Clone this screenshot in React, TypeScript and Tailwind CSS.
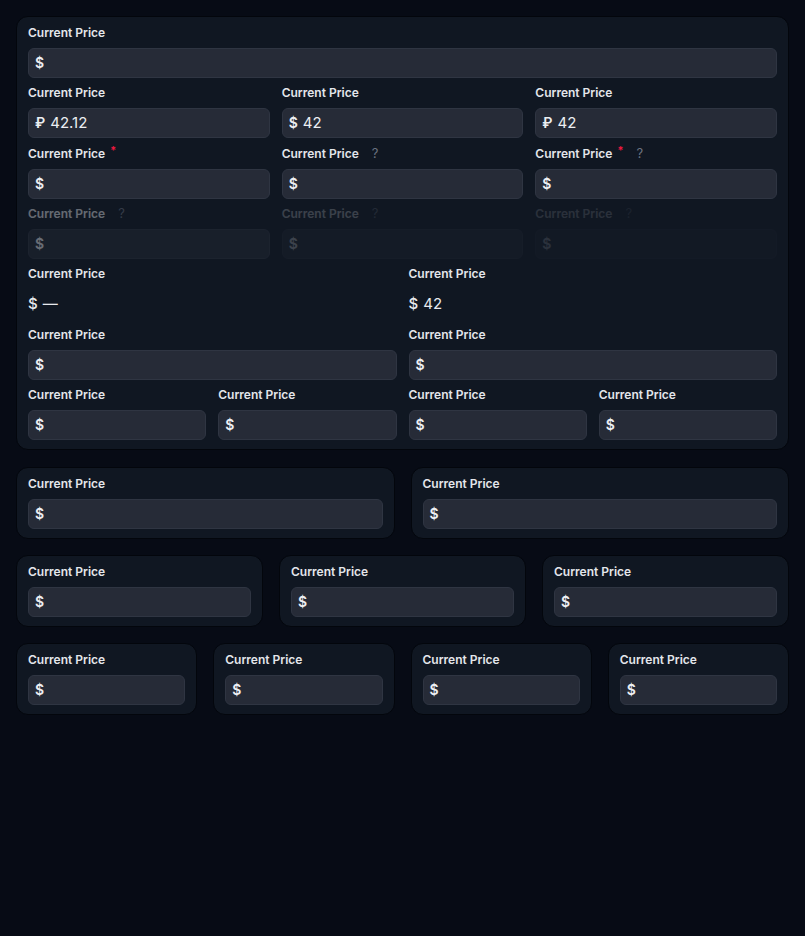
import React from "react";

type FieldProps = {
  prefix?: string;
  value?: string;
  required?: boolean;
  help?: boolean;
  fade?: string;
  display?: boolean;
};

function Field({ prefix = "$", value = "", required, help, fade = "", display }: FieldProps) {
  return (
    <div className={`flex flex-col min-w-0 ${fade}`}>
      <div className="flex items-center h-5 mb-[5px] text-xs font-semibold text-[#e4e6eb]">
        <span>Current Price</span>
        {required && <span className="ml-[5px] -mt-[7px] text-[11px] leading-none text-[#f0183f]">*</span>}
        {help && <span className="ml-[13px] text-[13px] font-normal text-[#6b7280]">?</span>}
      </div>
      {display ? (
        <div className="h-[30px] flex items-center text-[15px] text-[#e8eaee]">
          <span className="font-medium">{prefix}</span>
          <span className="ml-[5px]">{value || "—"}</span>
        </div>
      ) : (
        <div className="h-[30px] flex items-center px-[6px] rounded-md bg-[#262b37] border border-[#2f3542] text-[#eceef2]">
          <span className="text-sm font-semibold">{prefix}</span>
          {value && <span className="ml-[5px] text-[15px]">{value}</span>}
        </div>
      )}
    </div>
  );
}

function Card({ children, className = "" }: { children: React.ReactNode; className?: string }) {
  return (
    <div className={`bg-[#101722] border border-[#03060c] rounded-xl px-[11px] pt-[6px] pb-[9px] ${className}`}>
      {children}
    </div>
  );
}

export default function App() {
  return (
    <div
      className="min-h-[936px] bg-[#070b15] p-4 flex flex-col gap-4"
      style={{ fontFamily: "Inter, 'Noto Sans', sans-serif" }}
    >
      <Card className="flex flex-col gap-y-[5.33px] mb-px">
        <Field />
        <div className="grid grid-cols-3 gap-3">
          <Field prefix="₽" value="42.12" />
          <Field value="42" />
          <Field prefix="₽" value="42" />
        </div>
        <div className="grid grid-cols-3 gap-3">
          <Field required />
          <Field help />
          <Field required help />
        </div>
        <div className="grid grid-cols-3 gap-3">
          <Field help fade="opacity-40" />
          <Field help fade="opacity-20" />
          <Field help fade="opacity-[0.12]" />
        </div>
        <div className="grid grid-cols-2 gap-3">
          <Field display />
          <Field display value="42" />
        </div>
        <div className="grid grid-cols-2 gap-3">
          <Field />
          <Field />
        </div>
        <div className="grid grid-cols-4 gap-3">
          <Field />
          <Field />
          <Field />
          <Field />
        </div>
      </Card>

      <div className="grid grid-cols-2 gap-4">
        <Card><Field /></Card>
        <Card><Field /></Card>
      </div>
      <div className="grid grid-cols-3 gap-4">
        <Card><Field /></Card>
        <Card><Field /></Card>
        <Card><Field /></Card>
      </div>
      <div className="grid grid-cols-4 gap-4">
        <Card><Field /></Card>
        <Card><Field /></Card>
        <Card><Field /></Card>
        <Card><Field /></Card>
      </div>
    </div>
  );
}
